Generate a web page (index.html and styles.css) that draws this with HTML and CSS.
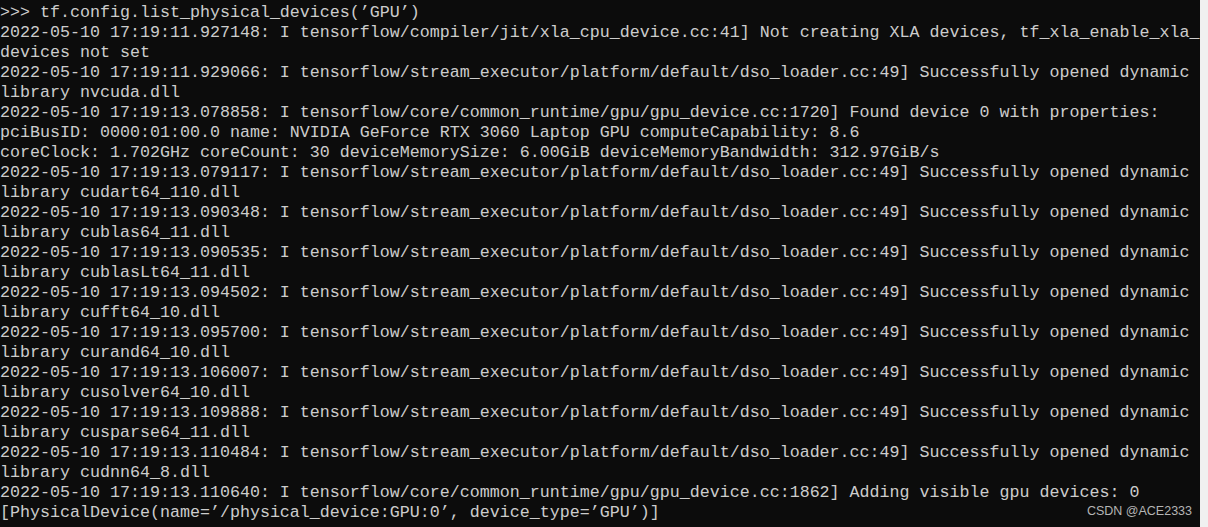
FILE: index.html
```html
<!DOCTYPE html>
<html>
<head>
<meta charset="utf-8">
<link rel="stylesheet" href="styles.css">
</head>
<body>
<div class="window">
<div class="console">
<div class="line">&gt;&gt;&gt; tf.config.list_physical_devices(’GPU’)</div>
<div class="line">2022-05-10 17:19:11.927148: I tensorflow/compiler/jit/xla_cpu_device.cc:41] Not creating XLA devices, tf_xla_enable_xla_</div>
<div class="line">devices not set</div>
<div class="line">2022-05-10 17:19:11.929066: I tensorflow/stream_executor/platform/default/dso_loader.cc:49] Successfully opened dynamic</div>
<div class="line">library nvcuda.dll</div>
<div class="line">2022-05-10 17:19:13.078858: I tensorflow/core/common_runtime/gpu/gpu_device.cc:1720] Found device 0 with properties:</div>
<div class="line">pciBusID: 0000:01:00.0 name: NVIDIA GeForce RTX 3060 Laptop GPU computeCapability: 8.6</div>
<div class="line">coreClock: 1.702GHz coreCount: 30 deviceMemorySize: 6.00GiB deviceMemoryBandwidth: 312.97GiB/s</div>
<div class="line">2022-05-10 17:19:13.079117: I tensorflow/stream_executor/platform/default/dso_loader.cc:49] Successfully opened dynamic</div>
<div class="line">library cudart64_110.dll</div>
<div class="line">2022-05-10 17:19:13.090348: I tensorflow/stream_executor/platform/default/dso_loader.cc:49] Successfully opened dynamic</div>
<div class="line">library cublas64_11.dll</div>
<div class="line">2022-05-10 17:19:13.090535: I tensorflow/stream_executor/platform/default/dso_loader.cc:49] Successfully opened dynamic</div>
<div class="line">library cublasLt64_11.dll</div>
<div class="line">2022-05-10 17:19:13.094502: I tensorflow/stream_executor/platform/default/dso_loader.cc:49] Successfully opened dynamic</div>
<div class="line">library cufft64_10.dll</div>
<div class="line">2022-05-10 17:19:13.095700: I tensorflow/stream_executor/platform/default/dso_loader.cc:49] Successfully opened dynamic</div>
<div class="line">library curand64_10.dll</div>
<div class="line">2022-05-10 17:19:13.106007: I tensorflow/stream_executor/platform/default/dso_loader.cc:49] Successfully opened dynamic</div>
<div class="line">library cusolver64_10.dll</div>
<div class="line">2022-05-10 17:19:13.109888: I tensorflow/stream_executor/platform/default/dso_loader.cc:49] Successfully opened dynamic</div>
<div class="line">library cusparse64_11.dll</div>
<div class="line">2022-05-10 17:19:13.110484: I tensorflow/stream_executor/platform/default/dso_loader.cc:49] Successfully opened dynamic</div>
<div class="line">library cudnn64_8.dll</div>
<div class="line">2022-05-10 17:19:13.110640: I tensorflow/core/common_runtime/gpu/gpu_device.cc:1862] Adding visible gpu devices: 0</div>
<div class="line">[PhysicalDevice(name=’/physical_device:GPU:0’, device_type=’GPU’)]</div>
<div class="line">&gt;&gt;&gt;</div>
<div class="watermark">CSDN @ACE2333</div>
</div>
<div class="scroll"></div>
</div>
</body>
</html>
```

FILE: styles.css
```css
html, body {
  margin: 0;
  padding: 0;
  height: 527px;
  overflow: hidden;
  background: #f0f0f0;
}

.window {
  display: flex;
  height: 527px;
}

.console {
  position: relative;
  width: 1200px;
  flex: 0 0 1200px;
  height: 527px;
  box-sizing: border-box;
  padding-top: 3px;
  overflow: hidden;
  background: #0c0c0c;
  color: #cccccc;
  font-family: "Liberation Mono", "DejaVu Sans Mono", monospace;
  font-size: 16.667px;
}

.line {
  height: 20px;
  line-height: 20px;
  white-space: pre;
  overflow: hidden;
}

.scroll {
  flex: 1;
  background: #f0f0f0;
}

.watermark {
  position: absolute;
  right: 8px;
  bottom: 8px;
  font-family: "Liberation Sans", Arial, sans-serif;
  font-size: 12.5px;
  line-height: 16px;
  color: #b4b4b4;
}
```
